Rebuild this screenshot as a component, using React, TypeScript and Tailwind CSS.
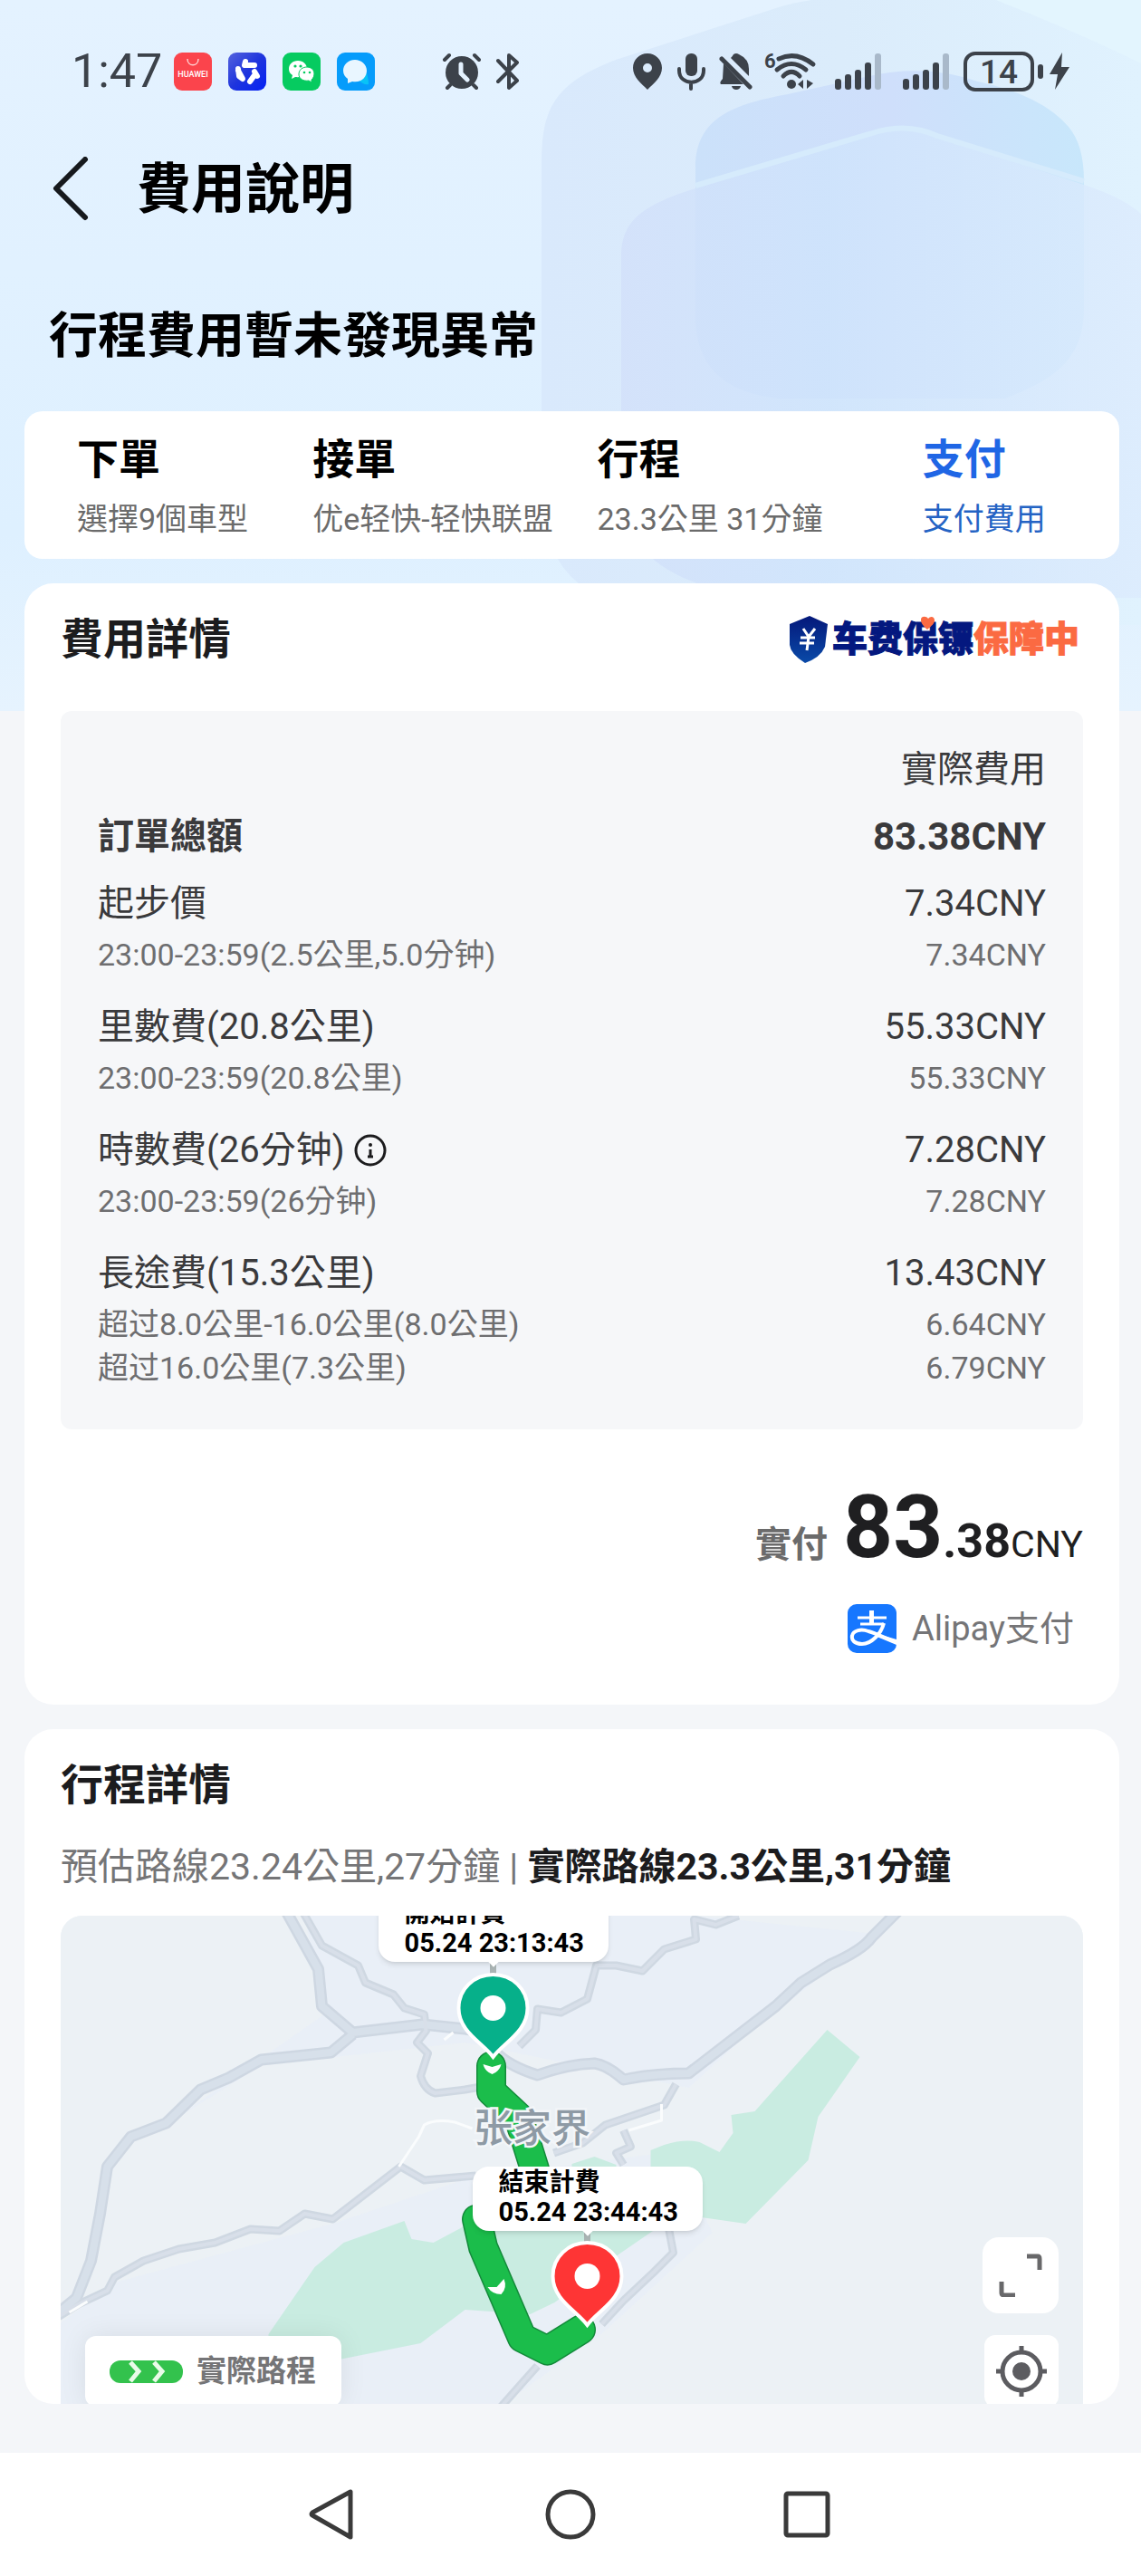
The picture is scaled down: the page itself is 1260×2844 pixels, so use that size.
import React from "react";

const INK = "#3c424a";

function HeaderBackdrop() {
  return (
    <div className="absolute inset-x-0 top-0 h-[785px] overflow-hidden bg-[#e2f1ff]" aria-hidden="true">
      <svg className="h-full w-full" viewBox="0 0 1260 785" preserveAspectRatio="none">
        <defs>
          <linearGradient id="tint" x1="0" y1="0" x2="0" y2="1">
            <stop offset="0" stopColor="#e4f2ff" />
            <stop offset="0.75" stopColor="#def0ff" />
            <stop offset="1" stopColor="#e6f3fe" />
          </linearGradient>
          <linearGradient id="outer" x1="0" y1="0" x2="1" y2="0">
            <stop offset="0" stopColor="#d9e9fc" />
            <stop offset="0.5" stopColor="#dbecfb" />
            <stop offset="1" stopColor="#e0f2fe" />
          </linearGradient>
          <linearGradient id="mid" x1="0" y1="0" x2="1" y2="0">
            <stop offset="0" stopColor="#cbe1fa" />
            <stop offset="0.5" stopColor="#cfdffb" />
            <stop offset="1" stopColor="#c8e7fb" />
          </linearGradient>
          <linearGradient id="inner" x1="0" y1="0" x2="1" y2="0">
            <stop offset="0" stopColor="#d2e0fa" />
            <stop offset="0.4" stopColor="#cfe4fc" />
            <stop offset="1" stopColor="#dcebfd" />
          </linearGradient>
        </defs>
        <rect width="1260" height="785" fill="url(#tint)" />
        <path d="M1020 0H1260V160Z" fill="#e3f5fe" />
        <path d="M598 180C598 120 612 92 680 66L860 8Q930 -14 1100 0Q1200 40 1260 70V690H760Q690 680 640 645Q598 612 598 540Z" fill="url(#outer)" />
        <path d="M768 185C768 130 810 115 870 104L960 84Q1020 70 1080 90Q1150 105 1180 140Q1197 160 1197 200V340C1197 400 1160 420 1110 440H860Q768 430 768 350Z" fill="url(#mid)" />
        <path d="M686 282C686 244 710 226 768 208L950 152Q1005 132 1050 156L1197 204Q1240 218 1260 236V660H840Q686 640 686 540Z" fill="url(#inner)" opacity="0.8" />
        <path d="M768 205L960 148Q1000 134 1035 150L1197 200" fill="none" stroke="#d6ebfc" strokeWidth="6" />
      </svg>
    </div>
  );
}

function AlarmIcon() {
  return (
    <svg className="h-[42px] w-[44px]" viewBox="0 0 44 42">
      <g stroke={INK} strokeWidth="4" strokeLinecap="round">
        <path d="M3 8L8 3M36 3L41 8M9 36L6 39M35 36L38 39" />
      </g>
      <circle cx="22" cy="22" r="18" fill={INK} />
      <path d="M21 13V23L28 30" fill="none" stroke="#e4f2ff" strokeWidth="5" strokeLinecap="round" strokeLinejoin="round" />
    </svg>
  );
}

function BluetoothIcon() {
  return (
    <svg className="ml-4 h-[42px] w-[26px]" viewBox="0 0 26 42" fill="none" stroke={INK} strokeWidth="4" strokeLinecap="round" strokeLinejoin="round">
      <path d="M2 9L23 31L14 39V3L23 11L2 32" />
    </svg>
  );
}

function SignalIcon() {
  return (
    <svg className="h-[42px] w-[51px]" viewBox="0 0 51 42">
      <rect x="0" y="29" width="7" height="12" rx="3" fill={INK} />
      <rect x="11" y="24" width="7" height="17" rx="3" fill={INK} />
      <rect x="22" y="19" width="7" height="22" rx="3" fill={INK} />
      <rect x="33" y="11" width="7" height="30" rx="3" fill={INK} />
      <rect x="44" y="1" width="7" height="40" rx="3" fill="#a9b9ca" />
    </svg>
  );
}

function StatusBar() {
  return (
    <div className="flex h-[50px] items-center px-[79px] text-[#3c424a]">
      <span className="w-[113px] text-[52px] leading-[50px]">1:47</span>
      <div className="flex gap-[18px]">
        <svg className="h-[42px] w-[42px]" viewBox="0 0 42 42">
          <rect width="42" height="42" rx="9" fill="#fb444c" />
          <path d="M15 7C15 16 27 16 27 7" fill="none" stroke="#ffd0d0" strokeWidth="1.5" />
          <text x="21" y="27" textAnchor="middle" fontSize="9" fontWeight="500" fill="#fff" fontFamily="Roboto, sans-serif">HUAWEI</text>
        </svg>
        <svg className="h-[42px] w-[42px]" viewBox="0 0 42 42">
          <defs>
            <linearGradient id="blueApp" x1="0" y1="0" x2="1" y2="1">
              <stop offset="0" stopColor="#5563dd" />
              <stop offset="0.5" stopColor="#1f35dd" />
              <stop offset="1" stopColor="#0421f5" />
            </linearGradient>
          </defs>
          <rect width="42" height="42" rx="9" fill="url(#blueApp)" />
          <g stroke="#fff" strokeWidth="6" strokeLinecap="round" strokeLinejoin="round" fill="none">
            <path d="M19 10L18 14H29" />
            <path d="M11 18L12 26L16 29L11 20" />
            <path d="M29 21L32 26L29 25L24 32" />
          </g>
        </svg>
        <svg className="h-[42px] w-[42px]" viewBox="0 0 42 42">
          <rect width="42" height="42" rx="9" fill="#06cb60" />
          <path d="M17 9C11 9 7 13 7 18C7 21 8 23 11 25L10 29L14 27C22 28 27 24 27 18C27 13 23 9 17 9Z" fill="#fff" />
          <path d="M27 16C22 16 18 19 18 24C18 29 23 32 29 31L32 33L32 30C37 26 36 16 27 16Z" fill="#fff" stroke="#06cb60" strokeWidth="1" />
          <g fill="#06cb60">
            <circle cx="14" cy="15" r="1.6" />
            <circle cx="20" cy="15" r="1.6" />
            <circle cx="24" cy="22" r="1.3" />
            <circle cx="30" cy="22" r="1.3" />
          </g>
        </svg>
        <svg className="h-[42px] w-[42px]" viewBox="0 0 42 42">
          <rect width="42" height="42" rx="9" fill="#069cfb" />
          <path d="M25 27L33 23C34 27 35 30 35 35C32 36 27 34 25 31Z" fill="#08c3f7" />
          <path d="M20 8C12 8 7 14 7 20C7 24 9 27 12 29V34L17 32C27 34 33 27 33 20C33 13 27 8 20 8Z" fill="#e9f6ff" />
        </svg>
      </div>
      <div className="ml-[74px] flex">
        <AlarmIcon />
        <BluetoothIcon />
      </div>
      <div className="ml-auto flex items-center">
        <svg className="h-[42px] w-[34px]" viewBox="0 0 34 42">
          <path d="M17 1C8 1 1 8 1 17C1 27 10 34 17 41C24 34 33 27 33 17C33 8 26 1 17 1ZM17 12A5 5 0 1 1 17 22A5 5 0 1 1 17 12Z" fill={INK} />
        </svg>
        <svg className="ml-4 h-[42px] w-[31px]" viewBox="0 0 31 42">
          <rect x="9" y="1" width="13" height="25" rx="6" fill={INK} />
          <path d="M2 18V20C2 37 29 37 29 20V18M15 33V40" fill="none" stroke={INK} strokeWidth="4" strokeLinecap="round" />
        </svg>
        <svg className="ml-[15px] h-[42px] w-[37px]" viewBox="0 0 37 42">
          <path d="M5 12L27 35H2Q0 33 4 29ZM13 6Q15 4 16 2Q19 0 22 2Q33 7 33 18V26Z" fill={INK} />
          <path d="M3 7L34 38" stroke={INK} strokeWidth="5" strokeLinecap="round" />
          <path d="M14 37H24Q23 41 19 41Q15 41 14 37Z" fill={INK} />
        </svg>
        <svg className="ml-[12px] h-[44px] w-[58px] overflow-visible" viewBox="0 0 58 44">
          <text x="1" y="18" fontSize="22" fontWeight="700" fill={INK} fontFamily="Roboto, sans-serif">6</text>
          <g fill="none" stroke={INK} strokeWidth="5" strokeLinecap="round">
            <path d="M17 8Q36 -1 55 14" />
            <path d="M15 20Q31 7 47 20" />
            <path d="M22 27Q31 18 40 27" />
          </g>
          <circle cx="31" cy="36" r="5" fill={INK} />
          <path d="M38 36L44 31V41ZM48 31V41L55 35Z" fill={INK} />
        </svg>
        <div className="ml-[21px] flex gap-6">
          <SignalIcon />
          <SignalIcon />
        </div>
        <div className="ml-4 flex h-[44px] w-[78px] items-center justify-center rounded-[13px] border-4 border-[#3c424a] text-[37px] leading-none font-medium">14</div>
        <div className="ml-1 h-4 w-[6px] rounded-full bg-[#3c424a]" />
        <svg className="ml-[7px] h-[42px] w-[22px]" viewBox="0 0 22 42">
          <path d="M14 0L0 24H9L6 41L22 16H13Z" fill={INK} />
        </svg>
      </div>
    </div>
  );
}

const steps = [
  { title: "下單", detail: "選擇9個車型", active: false },
  { title: "接單", detail: "优e轻快-轻快联盟", active: false },
  { title: "行程", detail: "23.3公里 31分鐘", active: false },
  { title: "支付", detail: "支付費用", active: true },
];

function Steps() {
  return (
    <ol className="mt-[50px] mr-6 ml-[27px] grid grid-cols-[260fr_314fr_359fr_217fr] rounded-[20px] bg-white pt-[25px] pb-[18px] pl-[58px]">
      {steps.map((s) => (
        <li key={s.title} className={s.active ? "text-[#1f66e5]" : "text-black"}>
          <div className="text-[46px] leading-[56px] font-bold">{s.title}</div>
          <div className={s.active ? "mt-3 text-[34px] leading-[52px] whitespace-nowrap text-[#2463c4]" : "mt-3 text-[34px] leading-[52px] whitespace-nowrap text-[#6b6b6b]"}>{s.detail}</div>
        </li>
      ))}
    </ol>
  );
}

function GuardLogo() {
  return (
    <div className="flex items-center">
      <svg className="h-[52px] w-[44px]" viewBox="0 0 44 52">
        <defs>
          <linearGradient id="shield" x1="0" y1="0" x2="0" y2="1">
            <stop offset="0" stopColor="#04187a" />
            <stop offset="1" stopColor="#0a4aa8" />
          </linearGradient>
        </defs>
        <path d="M23 0L43 9L40 34Q35 46 18 52Q2 42 1 32V9Z" fill="url(#shield)" />
        <path d="M16 14L22 23L29 14M22 23L20 38M13 24H29M12 30H28" fill="none" stroke="#fff" strokeWidth="3" />
      </svg>
      <div className="relative ml-1 text-[39px] leading-[52px] font-black whitespace-nowrap text-[#04187f] [-webkit-text-stroke:1px_currentColor] [font-style:oblique_8deg]">
        车费保镖<span className="text-[#fb6a42]">保障中</span>
        <svg className="absolute top-0 left-[98px] h-[15px] w-[15px]" viewBox="0 0 15 15">
          <path d="M7 15C1 10 0 7 0 4C0 0 6 0 8 3C10 0 15 0 15 5C15 8 12 11 7 15Z" fill="#fb6a42" />
        </svg>
      </div>
    </div>
  );
}

type Fee = { name: string; amount: string; info?: boolean; parts: [string, string][] };

const fees: Fee[] = [
  { name: "起步價", amount: "7.34CNY", parts: [["23:00-23:59(2.5公里,5.0分钟)", "7.34CNY"]] },
  { name: "里數費(20.8公里)", amount: "55.33CNY", parts: [["23:00-23:59(20.8公里)", "55.33CNY"]] },
  { name: "時數費(26分钟)", amount: "7.28CNY", info: true, parts: [["23:00-23:59(26分钟)", "7.28CNY"]] },
  {
    name: "長途費(15.3公里)",
    amount: "13.43CNY",
    parts: [
      ["超过8.0公里-16.0公里(8.0公里)", "6.64CNY"],
      ["超过16.0公里(7.3公里)", "6.79CNY"],
    ],
  },
];

function FeeTable() {
  return (
    <div className="mt-[51px] rounded-[12px] bg-[#f6f7f9] px-[41px] pt-[37px] pb-4">
      <table className="w-full text-[40px] leading-[56px] text-[#3a3a3c]">
        <thead>
          <tr>
            <td />
            <th scope="col" className="pb-[18px] text-right font-normal">實際費用</th>
          </tr>
          <tr>
            <th scope="row" className="pb-[18px] text-left font-bold">訂單總額</th>
            <td className="pb-[18px] text-right text-[42px] font-bold">83.38CNY</td>
          </tr>
        </thead>
        {fees.map((fee) => (
          <tbody key={fee.name}>
            <tr>
              <th scope="row" className="pb-1 text-left font-normal">
                <span className="flex items-center">
                  {fee.name}
                  {fee.info && (
                    <button type="button" aria-label="時數費說明" className="ml-[9px]">
                      <svg className="h-[38px] w-[38px]" viewBox="0 0 38 38">
                        <circle cx="19" cy="19" r="16" fill="none" stroke="#1c1c1e" strokeWidth="3" />
                        <circle cx="19" cy="13" r="2" fill="#1c1c1e" />
                        <path d="M19 18V26M16 26H22" fill="none" stroke="#1c1c1e" strokeWidth="3" />
                      </svg>
                    </button>
                  )}
                </span>
              </th>
              <td className="pb-1 text-right">{fee.amount}</td>
            </tr>
            {fee.parts.map(([label, value]) => (
              <tr key={label} className="text-[34px] leading-[48px] text-[#6e6e70] last:[&>*]:pb-[28px]">
                <th scope="row" className="text-left font-normal">{label}</th>
                <td className="text-right">{value}</td>
              </tr>
            ))}
          </tbody>
        ))}
      </table>
    </div>
  );
}

function FeeCard() {
  return (
    <section className="mt-[27px] mr-6 ml-[27px] rounded-[32px] bg-white px-10 pt-[34px] pb-[56px]">
      <div className="flex items-center justify-between pr-1">
        <h2 className="text-[47px] leading-[56px] font-bold text-[#1c1c1e]">費用詳情</h2>
        <GuardLogo />
      </div>
      <FeeTable />
      <p className="mt-[52px] flex h-[112px] items-baseline justify-end leading-[112px] text-[#1f1f21]">
        <span className="mr-[17px] text-[40px] font-bold text-[#6b6b6b]">實付</span>
        <span className="text-[96px] font-bold">83</span>
        <span className="text-[52px] font-bold">.38</span>
        <span className="text-[41px]">CNY</span>
      </p>
      <div className="mt-7 flex items-center justify-end pr-[10px]">
        <svg className="h-[56px] w-[54px]" viewBox="0 0 54 56" aria-hidden="true">
          <rect y="1" width="54" height="54" rx="10" fill="#1677ff" />
          <path d="M11 16H43M14 23H40" fill="none" stroke="#fff" strokeWidth="3" />
          <path d="M24 8H29V22H24Z" fill="#fff" />
          <path d="M40 22C37 34 26 45 16 45C8 45 4 41 5 36C6 30 15 28 23 31C34 34 42 39 54 43" fill="none" stroke="#fff" strokeWidth="4" />
          <path d="M34 34L54 40V46L30 36Z" fill="#fff" />
        </svg>
        <span className="ml-[17px] text-[38px] leading-[56px] text-[#757577]">Alipay支付</span>
      </div>
    </section>
  );
}

const roads = [
  "M250 -4L285 59L289 100L323 129L400 120L447 125L480 130",
  "M323 131L299 151L222 159L186 179L155 192L117 229L78 244L52 277L44 329L34 381L18 422L-4 440",
  "M480 150Q495 166 527 176Q560 164 590 163Q604 165 622 181Q655 174 694 174L790 100L818 74L850 54Q886 38 896 24L926 -6",
];

const lanes = [
  "M268 -4L289 33L329 55L337 74L368 87L380 102L402 109L404 127L394 140L406 152L398 177Q402 192 414 196L447 192L470 188",
  "M749 0L724 10L700 4L702 26L667 37L643 61L614 55L592 55L582 92L553 107L527 103L525 126L507 144",
  "M459 287L402 292L376 277L301 335L270 329L242 348L210 346L171 361L131 368L92 381L60 399L52 414L20 429L-4 444",
  "M680 186L667 209L602 231L577 251L545 262M622 237L630 255L614 262L622 275",
  "M671 340L677 372L655 394L622 425L598 451M527 497L510 516L487 542",
];

function MapDrawing() {
  return (
    <svg className="absolute top-0 left-0 h-[539px] w-full" viewBox="0 0 1130 539" preserveAspectRatio="xMidYMid slice" aria-hidden="true">
      <rect x="-400" width="1930" height="539" fill="#ecf1f5" />
      <path d="M120 229L222 165L447 140L694 190L760 130L900 20L700 0H270L290 110ZM0 450L60 405L301 340L450 290L680 260L720 350L600 460L490 539H0Z" fill="#e9eff8" opacity="0.8" />
      <g fill="#c9ece1">
        <path d="M230 462L281 388L313 361L380 337L388 357L412 361L470 330H690L653 349L618 373L546 427L519 440L447 435L398 472L313 489L230 500Z" />
        <path d="M847 126L883 156L837 222L826 270L757 340L708 333L652 300V259L667 253Q690 246 706 250L728 261L743 240L741 220L767 216L798 181Z" />
        <path d="M565 274L590 266L614 275V290H565Z" />
      </g>
      <g fill="none" strokeLinejoin="round">
        {roads.map((d) => (
          <path key={d} d={d} stroke="#ced7e2" strokeWidth="13" />
        ))}
        {lanes.map((d) => (
          <path key={d} d={d} stroke="#cfd8e2" strokeWidth="9" />
        ))}
        {roads.map((d) => (
          <path key={d} d={d} stroke="#d7e0ea" strokeWidth="8" />
        ))}
        {lanes.map((d) => (
          <path key={d} d={d} stroke="#d8dfe9" strokeWidth="4" />
        ))}
        <path d="M374 277L396 244L402 231Q414 224 436 228L455 235M628 237L664 226V208" stroke="#fafcfd" strokeWidth="3" />
        <path d="M424 137L434 129M10 438L30 426" stroke="#fafcfd" strokeWidth="3" />
      </g>
      <g fill="none" strokeLinecap="round" strokeLinejoin="round">
        <path d="M476 166L476 194L506 222L524 280" stroke="#138a3a" strokeWidth="33" />
        <path d="M460 335L467 366L510 466L538 480L575 457" stroke="#138a3a" strokeWidth="33" />
        <path d="M476 166L476 194L506 222L524 280" stroke="#1bbd4b" strokeWidth="30" />
        <path d="M460 335L467 366L510 466L538 480L575 457" stroke="#1bbd4b" strokeWidth="30" />
      </g>
      <path d="M467 164L477 167L487 164Q485 172 477 175Q469 172 467 164Z" fill="#fff" />
      <path d="M472 410L482 410L490 401Q494 411 487 418Q477 418 472 410Z" fill="#fff" />
      <path d="M478 51V66M582 347V362" stroke="#aab4b4" strokeWidth="7" />
      <g stroke="#fff" strokeWidth="4">
        <path d="M478 65C457 65 440 81 440 102C440 128 466 140 478 156C490 140 516 128 516 102C516 81 499 65 478 65Z" fill="#06b08a" />
        <path d="M582 361C561 361 544 377 544 398C544 424 570 436 582 452C594 436 620 424 620 398C620 377 603 361 582 361Z" fill="#fe3535" />
      </g>
      <circle cx="478" cy="102" r="14" fill="#fff" />
      <circle cx="582" cy="398" r="14" fill="#fff" />
      <text x="521" y="250" textAnchor="middle" fontSize="43" fontWeight="500" fill="#8e9aa5" stroke="#f3f6f9" strokeWidth="5" paintOrder="stroke" fontFamily="'Noto Sans CJK SC', sans-serif">张家界</text>
    </svg>
  );
}

function MapBubble({ title, time, place }: { title: string; time: string; place: string }) {
  return (
    <div className={place}>
      <div>{title}</div>
      <div className="text-[29px]">{time}</div>
      <div className="absolute -bottom-[4px] left-1/2 h-2 w-2 -translate-x-1/2 rotate-45 bg-white" />
    </div>
  );
}

function TripMap() {
  return (
    <div className="relative mt-[26px] h-[539px] overflow-hidden rounded-t-[24px] bg-[#ecf1f5]">
      <MapDrawing />
      <MapBubble
        title="開始計費"
        time="05.24 23:13:43"
        place="absolute -top-5 left-1/2 -ml-[214px] w-[254px] rounded-[18px] bg-white pt-[1px] pb-[4px] pl-[29px] text-[28px] leading-[33px] font-bold whitespace-nowrap text-black shadow-md"
      />
      <MapBubble
        title="結束計費"
        time="05.24 23:44:43"
        place="absolute top-[277px] left-1/2 -ml-[110px] w-[254px] rounded-[18px] bg-white pt-[1px] pb-[4px] pl-[29px] text-[28px] leading-[33px] font-bold whitespace-nowrap text-black shadow-md"
      />
      <div className="absolute top-[464px] left-[27px] flex h-[78px] w-[283px] items-center rounded-[12px] bg-white pl-[27px] shadow-[0_0_30px_rgba(0,0,0,0.08)]">
        <svg className="h-[25px] w-[81px]" viewBox="0 0 81 25" aria-hidden="true">
          <rect width="81" height="25" rx="12" fill="#33c24d" />
          <path d="M23 2L32 12L23 23M49 2L58 12L49 23" fill="none" stroke="#e9fbe9" strokeWidth="5" />
        </svg>
        <span className="ml-[15px] text-[33px] leading-[40px] font-bold text-[#757577]">實際路程</span>
      </div>
      <div className="absolute top-[355px] right-[27px] flex flex-col items-end gap-6">
        <button type="button" aria-label="全螢幕" className="flex h-[84px] w-[84px] items-center justify-center rounded-[18px] bg-white">
          <svg className="h-[48px] w-[48px]" viewBox="0 0 48 48" fill="none" stroke="#68686a" strokeWidth="5">
            <path d="M31 3H43Q45 3 45 6V18M3 31V43Q3 46 6 46H18" />
          </svg>
        </button>
        <button type="button" aria-label="定位" className="flex h-[80px] w-[82px] items-center justify-center rounded-[12px] bg-white">
          <svg className="h-[56px] w-[56px]" viewBox="0 0 56 56" fill="none" stroke="#5c5c60" strokeWidth="5">
            <circle cx="28" cy="28" r="21" />
            <circle cx="28" cy="28" r="10" fill="#5c5c60" stroke="none" />
            <path d="M28 0V8M28 48V56M0 28H8M48 28H56" />
          </svg>
        </button>
      </div>
    </div>
  );
}

export default function App() {
  return (
    <div className="relative isolate min-h-screen bg-[#f4f6f9] [font-family:Roboto,'Noto_Sans_CJK_TC',sans-serif]">
      <div className="absolute inset-0 -z-10">
        <HeaderBackdrop />
      </div>
      <header className="pt-[54px]">
        <StatusBar />
        <div className="mt-16 flex h-[84px] items-center pl-[55px]">
          <button type="button" aria-label="返回">
            <svg className="h-[74px] w-[46px]" viewBox="0 0 46 74" fill="none" stroke="#16191d" strokeWidth="6" strokeLinecap="round" strokeLinejoin="round">
              <path d="M39 3L7 35L39 67" />
            </svg>
          </button>
          <h1 className="ml-[50px] text-[60px] leading-[84px] font-bold text-black">費用說明</h1>
        </div>
      </header>
      <main>
        <p className="mt-[88px] pl-[54px] text-[54px] leading-[64px] font-bold text-black">行程費用暫未發現異常</p>
        <Steps />
        <FeeCard />
        <section className="mt-[27px] mr-6 ml-[27px] overflow-hidden rounded-[32px] bg-white px-10 pt-[34px]">
          <h2 className="text-[47px] leading-[56px] font-bold text-[#1c1c1e]">行程詳情</h2>
          <p className="mt-[34px] text-[41px] leading-[56px] whitespace-nowrap text-[#757577]">
            預估路線23.24公里,27分鐘 | <span className="font-bold text-[#1c1c1e]">實際路線23.3公里,31分鐘</span>
          </p>
          <TripMap />
        </section>
      </main>
      <nav aria-label="系統導覽" className="mt-[54px] flex h-[136px] items-center justify-center gap-[206px] bg-white">
        <button type="button" aria-label="返回上一頁">
          <svg className="h-[56px] w-[56px]" viewBox="0 0 56 56" fill="none" stroke="#3a3a3a" strokeWidth="5" strokeLinejoin="round">
            <path d="M47 3V53L5 29Q3 28 5 26Z" />
          </svg>
        </button>
        <button type="button" aria-label="主畫面">
          <svg className="h-[56px] w-[56px]" viewBox="0 0 56 56" fill="none" stroke="#3a3a3a" strokeWidth="5">
            <circle cx="28" cy="28" r="25" />
          </svg>
        </button>
        <button type="button" aria-label="最近使用">
          <svg className="h-[56px] w-[56px]" viewBox="0 0 56 56" fill="none" stroke="#3a3a3a" strokeWidth="5">
            <rect x="4" y="5" width="46" height="46" rx="2" />
          </svg>
        </button>
      </nav>
    </div>
  );
}
